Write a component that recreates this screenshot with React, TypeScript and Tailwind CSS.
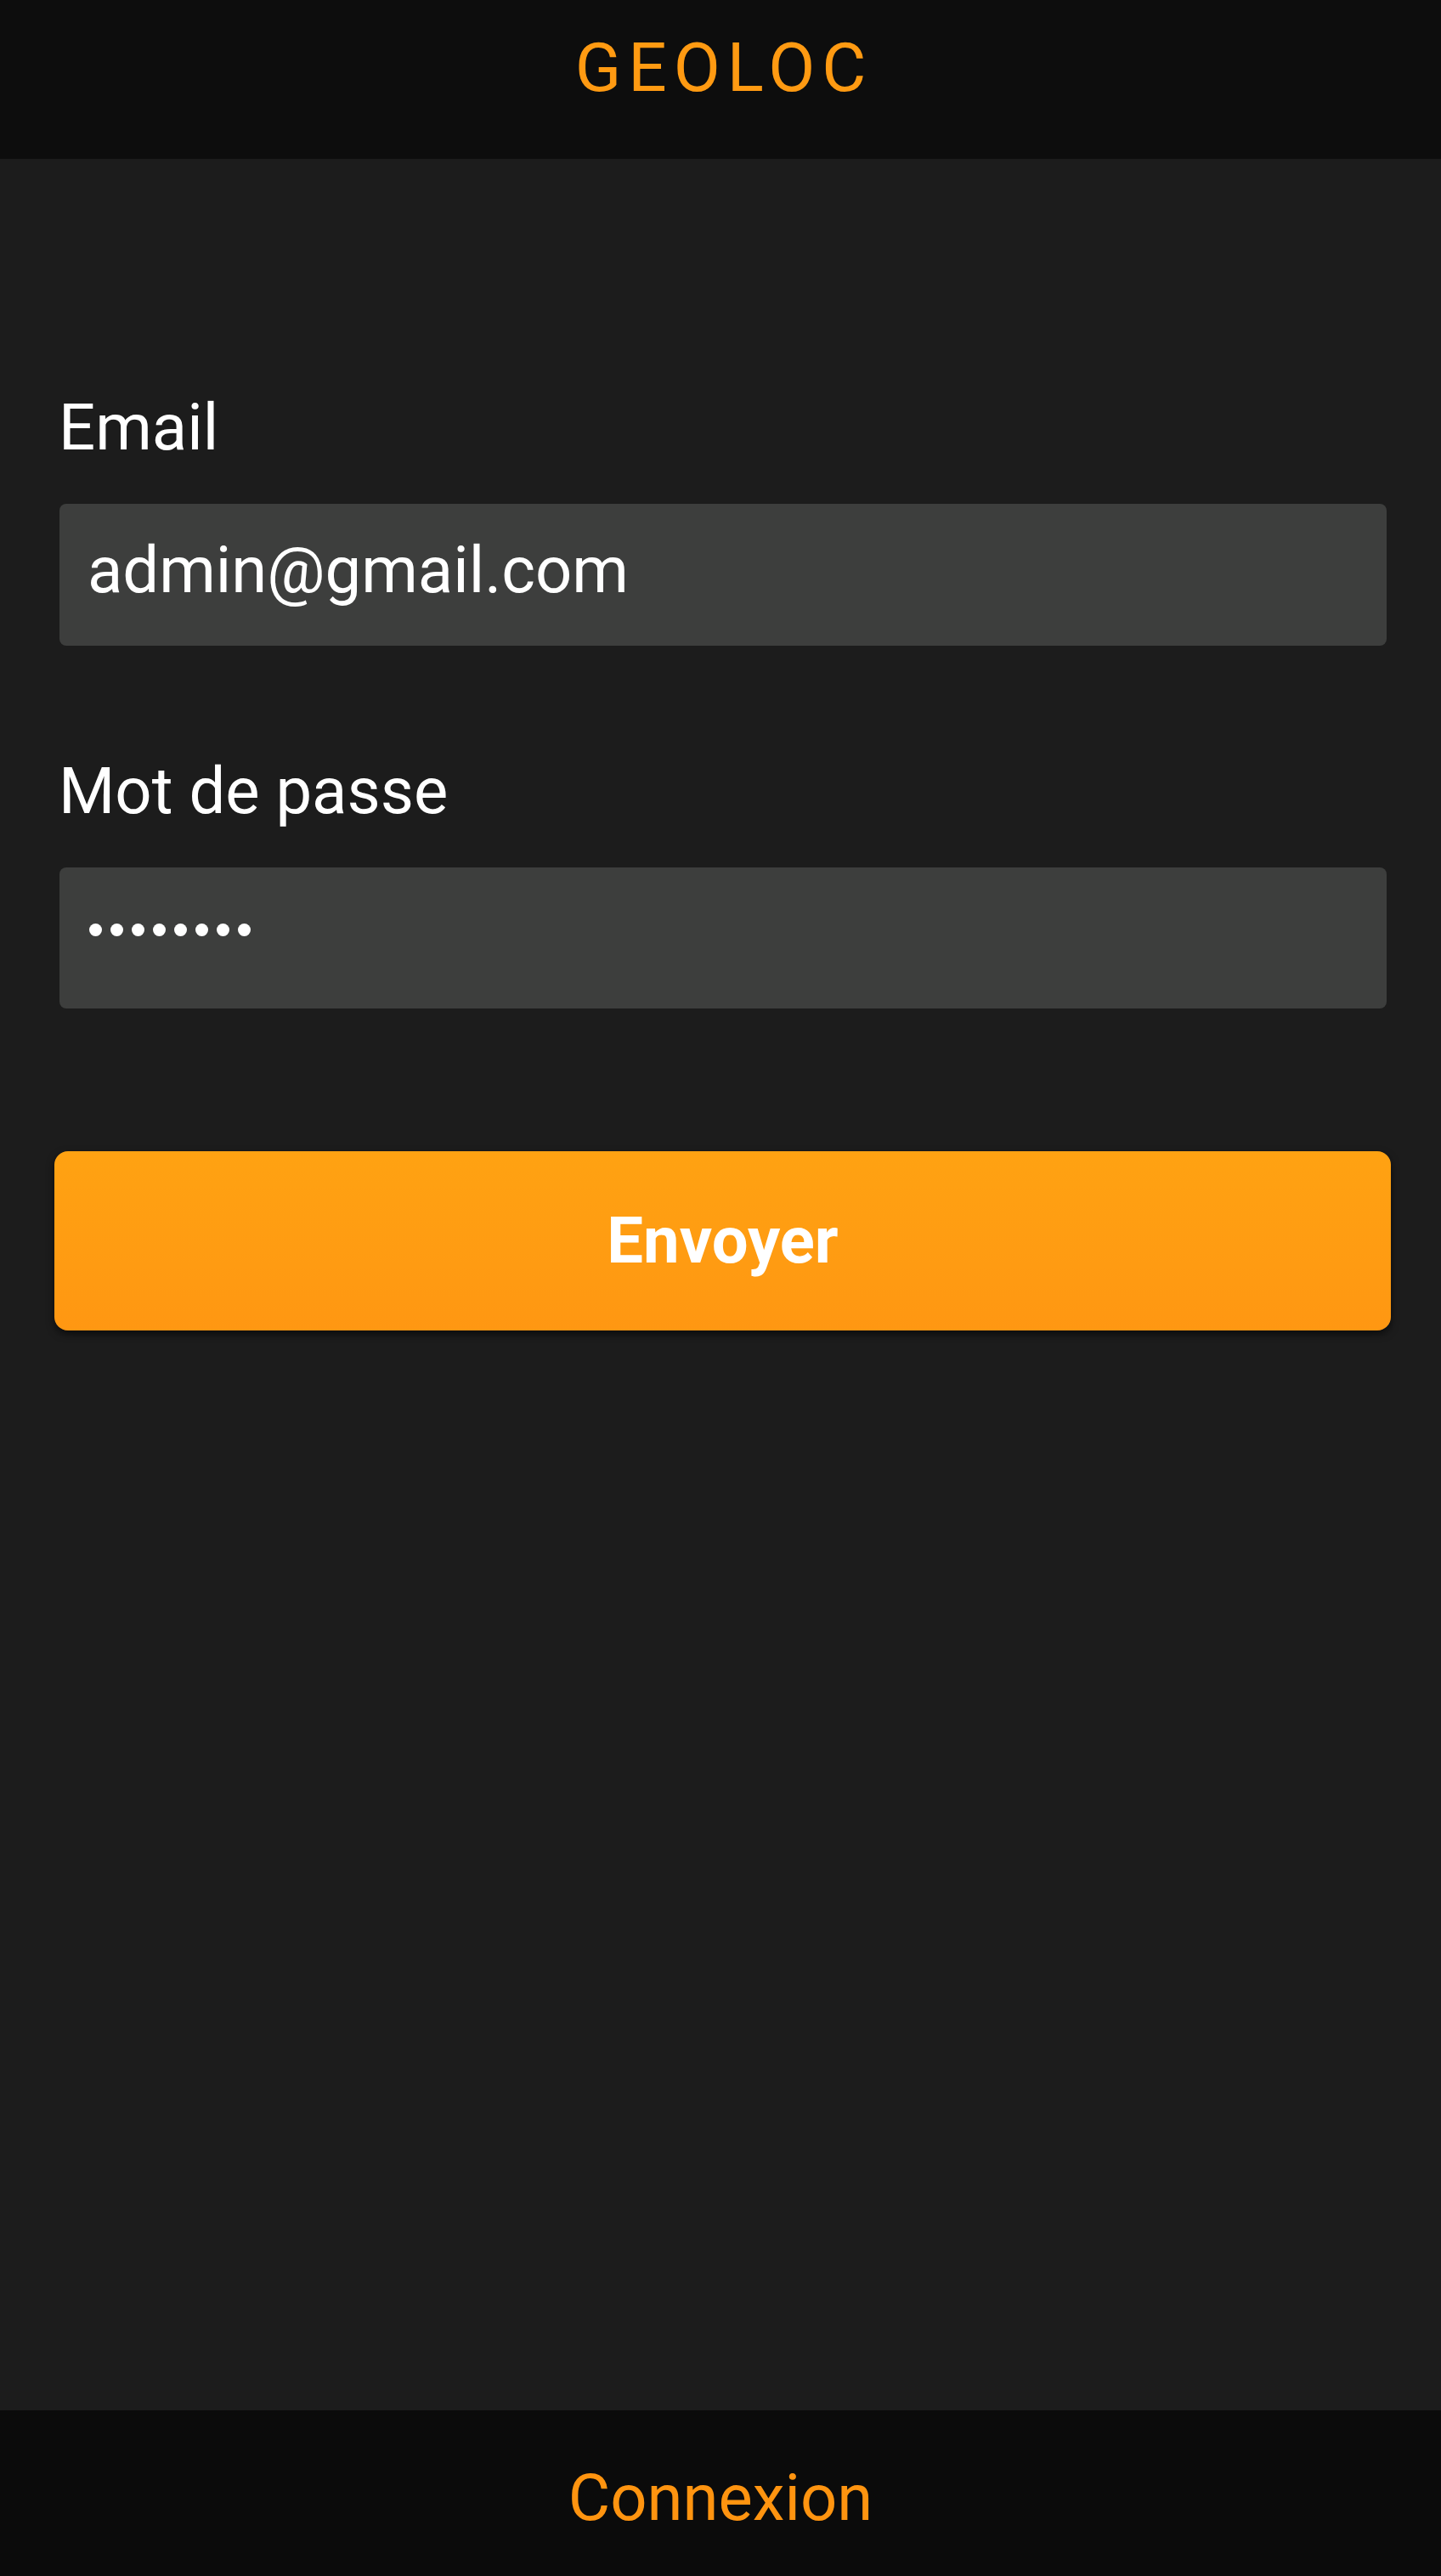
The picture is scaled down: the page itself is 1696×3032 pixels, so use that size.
import React from "react";

export default function App() {
  const font = { fontFamily: "Roboto, 'Noto Sans', 'Liberation Sans', sans-serif" };
  const dots = [0, 1, 2, 3, 4, 5, 6, 7];
  return (
    <div style={font} className="flex h-[3032px] w-full flex-col bg-[#1c1c1c]">
      <header className="flex h-[187px] shrink-0 justify-center bg-[#0d0d0d] pt-[33px]">
        <h1 className="pl-[8px] text-[80px] font-normal leading-[94px] tracking-[8px] text-[#ff9a12]">
          GEOLOC
        </h1>
      </header>

      <main className="flex flex-1 flex-col pt-[272px]">
        <div className="flex flex-col">
          <label className="pl-[69px] text-[76px] leading-[89px] text-white">Email</label>
          <div className="mt-[45px] ml-[70px] mr-[64px] h-[167px] rounded-[8px] bg-[#3d3e3d] pl-[33px] pt-[34px] text-[76px] leading-[89px] text-white">
            admin@gmail.com
          </div>

          <label className="mt-[127px] pl-[69px] text-[76px] leading-[89px] text-white">Mot de passe</label>
          <div
            aria-label="password"
            className="mt-[45px] ml-[70px] mr-[64px] flex h-[166px] items-start gap-[10px] rounded-[8px] bg-[#3d3e3d] pl-[35px] pt-[66px]"
          >
            {dots.map((d) => (
              <span key={d} className="h-[15px] w-[15px] rounded-full bg-white" />
            ))}
          </div>

          <button className="mt-[168px] ml-[64px] mr-[59px] flex h-[211px] items-center justify-center rounded-[16px] bg-gradient-to-b from-[#ffa212] to-[#ff9712] text-[76px] font-bold leading-[89px] text-white shadow-[0_4px_10px_rgba(0,0,0,0.6)]">
            Envoyer
          </button>
        </div>
      </main>

      <footer className="flex h-[195px] shrink-0 items-center justify-center bg-[#0b0b0b] pt-[12px]">
        <span className="text-[76px] leading-[89px] text-[#ff9410]">Connexion</span>
      </footer>
    </div>
  );
}
